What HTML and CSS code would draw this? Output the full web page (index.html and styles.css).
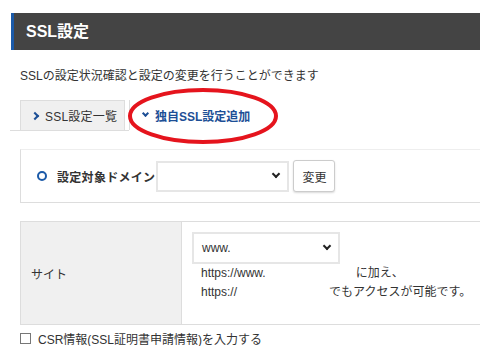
FILE: index.html
```html
<!DOCTYPE html>
<html lang="ja">
<head>
<meta charset="utf-8">
<link rel="stylesheet" href="styles.css">
</head>
<body>
<div class="page">
  <div class="header">SSL設定</div>
  <div class="content">
    <p class="desc">SSLの設定状況確認と設定の変更を行うことができます</p>
    <div class="tabs">
      <div class="tab-group">
        <div class="tab tab-inactive"><span class="chev-right"></span>SSL設定一覧</div>
      </div>
      <div class="tab tab-active"><span class="chev-down"></span>独自SSL設定追加</div>
      <svg class="mark" width="156" height="60" viewBox="0 0 156 60"><ellipse cx="76" cy="29" rx="73" ry="26" fill="none" stroke="#e5141d" stroke-width="4"/></svg>
    </div>
    <div class="domain-box">
      <span class="radio"></span>
      <span class="domain-label">設定対象ドメイン</span>
      <div class="select select-domain"><span class="sel-chev"></span></div>
      <button class="btn">変更</button>
    </div>
    <div class="site-table">
      <div class="site-head">サイト</div>
      <div class="site-body">
        <div class="select select-www"><span class="sel-text">www.</span><span class="sel-chev"></span></div>
        <div class="line"><span class="url">https://www.</span><span class="blank b1"></span><span>に加え、</span></div>
        <div class="line"><span class="url">https://</span><span class="blank b2"></span><span>でもアクセスが可能です。</span></div>
      </div>
    </div>
    <label class="csr"><span class="checkbox"></span>CSR情報(SSL証明書申請情報)を入力する</label>
  </div>
</div>
</body>
</html>
```
FILE: styles.css
```css
html, body {
  margin: 0;
  padding: 0;
  background: #fff;
  overflow: hidden;
}
.page {
  width: 480px;
  font-family: "Liberation Sans", "Noto Sans CJK JP", sans-serif;
  font-size: 12px;
  color: #333;
  padding-top: 13px;
}
.header {
  margin-left: 11px;
  height: 37px;
  line-height: 37px;
  background: #444;
  border-left: 3px solid #1b5aa8;
  color: #fff;
  font-weight: bold;
  font-size: 16px;
  padding-left: 12px;
}
.content {
  padding-left: 20px;
}
.desc {
  margin: 18px 0 0 0;
  line-height: 16px;
  height: 16px;
}
.tabs {
  position: relative;
  display: flex;
  margin-top: 16px;
  margin-left: -10px;
  height: 31px;
}
.tab-group {
  padding-left: 10px;
  padding-right: 4px;
  border-bottom: 1px solid #ddd;
  height: 30px;
}
.tab {
  height: 30px;
  display: flex;
  align-items: center;
  letter-spacing: 0.2px;
  box-sizing: border-box;
}
.tab-inactive {
  width: 105px;
  background: #f0f0f0;
  border: 1px solid #ddd;
  border-bottom: none;
  padding-left: 11px;
}
.tab-active {
  border-left: 1px solid #ddd;
  padding-left: 13px;
  color: #1d4f96;
  font-weight: bold;
  letter-spacing: 0;
}
.chev-right {
  width: 4px;
  height: 4px;
  border-top: 2px solid #1d4f96;
  border-right: 2px solid #1d4f96;
  transform: rotate(45deg);
  margin-right: 7px;
}
.chev-down {
  width: 3px;
  height: 3px;
  border-bottom: 2px solid #1d4f96;
  border-right: 2px solid #1d4f96;
  transform: rotate(45deg);
  margin-right: 7px;
  margin-top: -3px;
}
.mark {
  position: absolute;
  left: 117px;
  top: -13px;
}
.domain-box {
  margin-top: 18px;
  height: 52px;
  border: 1px solid #ddd;
  border-top-color: #eee;
  border-right: none;
  display: flex;
  align-items: center;
  padding-left: 16px;
}
.radio {
  width: 6px;
  height: 6px;
  border: 2.5px solid #1b5aa8;
  border-radius: 50%;
  margin-right: 10px;
}
.domain-label {
  font-weight: bold;
  letter-spacing: 0.3px;
  margin-right: 1px;
}
.select {
  position: relative;
  box-sizing: border-box;
  border: 2px solid #e6e6e6;
  background: #fff;
}
.select-domain {
  width: 133px;
  height: 31px;
}
.sel-chev {
  position: absolute;
  right: 8px;
  top: 50%;
  width: 4px;
  height: 4px;
  margin-top: -5px;
  border-bottom: 2px solid #222;
  border-right: 2px solid #222;
  transform: rotate(45deg);
}
.btn {
  margin-left: 4px;
  width: 42px;
  height: 32px;
  background: #fff;
  border: 1px solid #ccc;
  border-radius: 3px;
  box-shadow: 0 1px 2px rgba(0,0,0,0.15);
  font-family: inherit;
  font-size: 12px;
  color: #333;
  padding: 0;
}
.site-table {
  margin-top: 18px;
  display: flex;
  border: 1px solid #ddd;
  border-right: none;
  height: 102px;
}
.site-head {
  width: 150px;
  background: #f0f0f0;
  border-right: 1px solid #ddd;
  padding-left: 10px;
  display: flex;
  align-items: center;
}
.site-body {
  padding-left: 10px;
  padding-top: 10px;
}
.select-www {
  width: 148px;
  height: 32px;
  display: flex;
  align-items: center;
  padding-left: 8px;
}
.sel-text {
  color: #333;
}
.line {
  display: flex;
  height: 19px;
  line-height: 19px;
  padding-left: 9px;
}
.blank {
  display: inline-block;
}
.b1 { width: 90px; }
.b2 { width: 92px; }
.csr {
  display: flex;
  align-items: center;
  margin-top: 5px;
  height: 16px;
}
.checkbox {
  width: 9px;
  height: 9px;
  border: 1px solid #777;
  margin-right: 7px;
}
```
